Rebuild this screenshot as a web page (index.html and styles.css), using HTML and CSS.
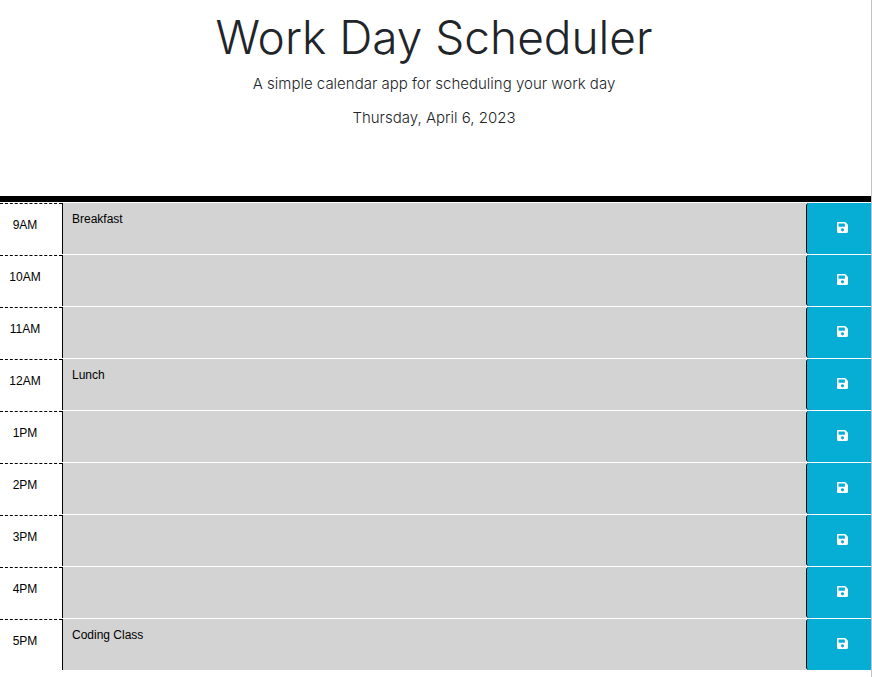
FILE: index.html
```
<!DOCTYPE html>
<html lang="en">
<head>
<meta charset="utf-8">
<meta name="viewport" content="width=device-width, initial-scale=1">
<title>Work Day Scheduler</title>
<link rel="stylesheet" href="styles.css">
</head>
<body>
<header class="header">
  <h1 class="title">Work Day Scheduler</h1>
  <p class="lead">A simple calendar app for scheduling your work day</p>
  <p class="lead">Thursday, April 6, 2023</p>
</header>
<main class="schedule" id="schedule"></main>
<template id="row">
  <div class="time-block">
    <label class="hour"></label>
    <textarea class="description"></textarea>
    <button class="save" type="button" aria-label="Save">
      <svg class="icon" viewBox="0 32 448 448" aria-hidden="true"><path fill="currentColor" d="M433.9 129.9l-83.9-83.9A48 48 0 0 0 316.1 32H48C21.5 32 0 53.5 0 80v352c0 26.5 21.5 48 48 48h352c26.5 0 48-21.5 48-48V163.9a48 48 0 0 0-14.1-34zM224 416c-35.3 0-64-28.7-64-64s28.7-64 64-64 64 28.7 64 64-28.7 64-64 64zm96-304.5V212c0 6.6-5.4 12-12 12H76c-6.6 0-12-5.4-12-12V108c0-6.6 5.4-12 12-12h228.5c3.2 0 6.2 1.3 8.5 3.5l3.5 3.5a12 12 0 0 1 3.5 8.5z"/></svg>
    </button>
  </div>
</template>
<script src="script.js"></script>
</body>
</html>
```
FILE: styles.css
```
* {
  box-sizing: border-box;
}

body {
  margin: 0;
  border-right: 1px solid #c4c4c4;
  min-height: 100vh;
  background: #fff;
  color: #212529;
  font-family: Inter, "Liberation Sans", sans-serif;
  font-size: 12px;
}

.header {
  padding: 8px 3px 68px 0;
  border-bottom: 6px solid #000;
  text-align: center;
}

.title {
  margin: 0 0 8px;
  font-size: 46px;
  font-weight: 300;
  line-height: 58px;
}

.lead {
  margin: 0 0 14px;
  font-size: 15px;
  font-weight: 300;
  line-height: 20px;
}

.lead:last-child {
  margin: 0;
}

.schedule {
  display: grid;
  gap: 1px;
  padding-top: 1px;
  color: #000;
  font-family: "Liberation Sans", Arial, sans-serif;
}

.time-block {
  display: grid;
  grid-template-columns: 62px 1fr 65px;
  height: 51px;
}

.hour {
  padding: 14px 12px 0 0;
  border-top: 1px dashed #000;
  line-height: 14px;
  text-align: center;
}

.description {
  width: 100%;
  height: 100%;
  padding: 9px;
  border: 0;
  border-left: 1px solid #000;
  border-radius: 0;
  background: #d3d3d3;
  color: #000;
  font: inherit;
  line-height: 14px;
  resize: none;
  outline: 0;
}

.save {
  display: flex;
  align-items: center;
  justify-content: center;
  padding: 0 0 2px 7px;
  border: 0;
  border-left: 1px solid #000;
  border-radius: 3px 0 0 3px;
  background: #06aed5;
  color: #fff;
}

.icon {
  width: 11px;
  height: 11px;
}
```
FILE: script.js
```
const entries = [
  ["9AM", "Breakfast"],
  ["10AM", ""],
  ["11AM", ""],
  ["12AM", "Lunch"],
  ["1PM", ""],
  ["2PM", ""],
  ["3PM", ""],
  ["4PM", ""],
  ["5PM", "Coding Class"]
];
const template = document.getElementById("row");
const schedule = document.getElementById("schedule");
for (const [hour, text] of entries) {
  const row = template.content.cloneNode(true);
  const label = row.querySelector("label");
  const area = row.querySelector("textarea");
  label.textContent = hour;
  label.htmlFor = area.id = "hour-" + hour;
  area.value = text;
  schedule.append(row);
}
```
